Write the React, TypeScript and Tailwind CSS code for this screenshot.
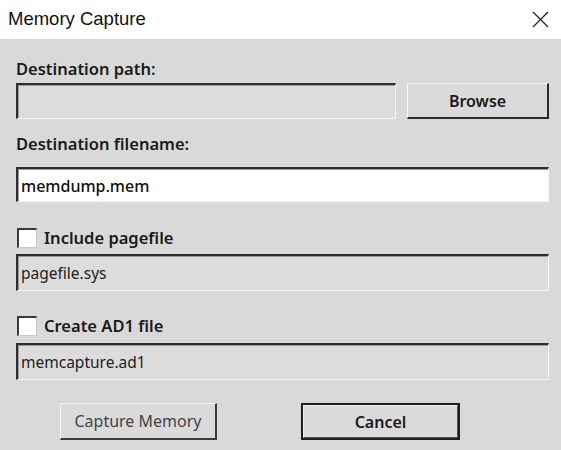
import React from "react";

const LABEL = "text-[16.5px] font-semibold text-[#1a1a1a] leading-[20px]";

function SunkenField({ value, white }: { value?: string; white?: boolean }) {
  return (
    <div
      className={
        "flex items-center border-t-2 border-l-2 border-b border-r border-t-[#2e2e2e] border-l-[#2e2e2e] border-b-[#f4f4f4] border-r-[#f4f4f4] " +
        (white ? "bg-white font-medium text-[16px] text-[#111]" : "bg-[#dcdcdc] text-[15.5px] text-[#222]")
      }
    >
      <div className="flex-1 self-stretch flex items-center border-t border-l border-[#9a9a9a] border-b-0 border-r-0 pl-[2px]">
        {value}
      </div>
    </div>
  );
}

function Checkbox({ label }: { label: string }) {
  return (
    <div className="flex items-center gap-[7px] pl-[1px]">
      <div className="w-[20px] h-[20px] bg-white border-t-2 border-l-2 border-b border-r border-t-[#3a3a3a] border-l-[#3a3a3a] border-b-[#c8c8c8] border-r-[#c8c8c8]" />
      <span className={LABEL}>{label}</span>
    </div>
  );
}

export default function App() {
  return (
    <div
      className="w-[561px] h-[450px] bg-[#d9d9d9] flex flex-col overflow-hidden"
      style={{ fontFamily: '"Noto Sans", "Open Sans", sans-serif' }}
    >
      {/* title bar */}
      <div className="h-[39px] bg-white flex items-center justify-between pl-[8px] pr-[12px]">
        <span
          className="text-[18.5px] text-[#111] leading-none"
          style={{ fontFamily: '"Liberation Sans", Arial, sans-serif' }}
        >
          Memory Capture
        </span>
        <svg width="17" height="17" viewBox="0 0 17 17" stroke="#222" strokeWidth="1.3" fill="none">
          <line x1="1" y1="1" x2="16" y2="16" />
          <line x1="16" y1="1" x2="1" y2="16" />
        </svg>
      </div>

      <div className="flex flex-col pl-[16px] pr-[12px]">
        <div className={LABEL + " mt-[20px]"}>Destination path:</div>
        <div className="flex gap-[11px] mt-[4px] h-[36px]">
          <div className="flex-1 flex flex-col [&>div]:flex-1">
            <SunkenField />
          </div>
          <button className="w-[142px] bg-[#dadada] border-t border-l border-b-2 border-r-2 border-t-[#f6f6f6] border-l-[#f6f6f6] border-b-[#2a2a2a] border-r-[#2a2a2a] text-[16px] font-semibold text-[#1a1a1a]">
            Browse
          </button>
        </div>

        <div className={LABEL + " mt-[15px]"}>Destination filename:</div>
        <div className="mt-[13px] h-[35px] flex flex-col [&>div]:flex-1">
          <SunkenField value="memdump.mem" white />
        </div>

        <div className="mt-[26px]">
          <Checkbox label="Include pagefile" />
        </div>
        <div className="mt-[6px] h-[37px] flex flex-col [&>div]:flex-1">
          <SunkenField value="pagefile.sys" />
        </div>

        <div className="mt-[25px]">
          <Checkbox label="Create AD1 file" />
        </div>
        <div className="mt-[7px] h-[37px] flex flex-col [&>div]:flex-1">
          <SunkenField value="memcapture.ad1" />
        </div>

        <div className="mt-[23px] flex h-[37px]">
          <button className="ml-[44px] w-[157px] bg-[#dadada] border-t border-l border-b-2 border-r-2 border-t-[#f6f6f6] border-l-[#f6f6f6] border-b-[#3a3a3a] border-r-[#3a3a3a] text-[16px] text-[#444]">
            Capture Memory
          </button>
          <button className="ml-[84px] w-[159px] border-2 border-[#1e1e1e] bg-[#dadada] flex">
            <span className="flex-1 flex items-center justify-center border-t border-l border-b border-r border-t-[#f4f4f4] border-l-[#f4f4f4] border-b-[#555] border-r-[#555] text-[16px] font-semibold text-[#1a1a1a]">
              Cancel
            </span>
          </button>
        </div>
      </div>
    </div>
  );
}
